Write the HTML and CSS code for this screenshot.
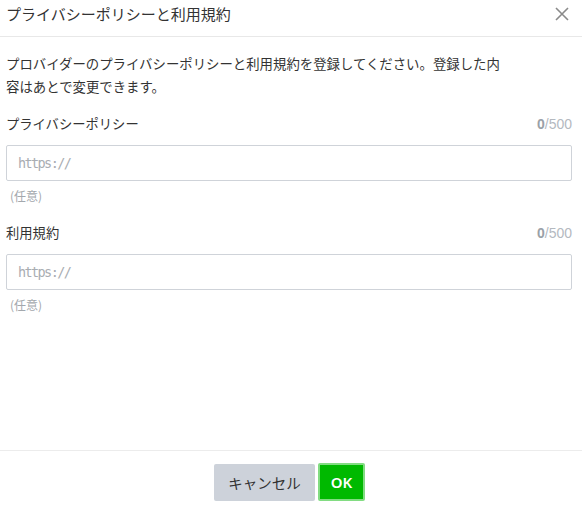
FILE: index.html
```html
<!DOCTYPE html>
<html lang="ja">
<head>
<meta charset="utf-8">
<link rel="stylesheet" href="styles.css">
</head>
<body>
<div class="dialog">
  <div class="header">
    <div class="title">プライバシーポリシーと利用規約</div>
    <div class="close" aria-label="close">
      <svg width="14" height="14" viewBox="0 0 14 14"><path d="M1 1L13 13M13 1L1 13" stroke="#8a8a8a" stroke-width="1.6" fill="none"/></svg>
    </div>
  </div>
  <div class="body">
    <p class="desc">プロバイダーのプライバシーポリシーと利用規約を登録してください。登録した内容はあとで変更できます。</p>
    <div class="field">
      <div class="label-row"><span class="label">プライバシーポリシー</span><span class="count"><b>0</b>/500</span></div>
      <input class="input" type="text" placeholder="https://">
      <div class="hint">(任意)</div>
    </div>
    <div class="field">
      <div class="label-row"><span class="label">利用規約</span><span class="count"><b>0</b>/500</span></div>
      <input class="input" type="text" placeholder="https://">
      <div class="hint">(任意)</div>
    </div>
  </div>
  <div class="footer">
    <button class="btn cancel">キャンセル</button>
    <button class="btn ok">OK</button>
  </div>
</div>
</body>
</html>
```
FILE: styles.css
```css
html, body {
  margin: 0;
  padding: 0;
  background: #fff;
}
body {
  font-family: "Noto Sans CJK JP", "Noto Sans", sans-serif;
  color: #333;
}
.dialog {
  height: 508px;
  display: flex;
  flex-direction: column;
}
.header {
  height: 36px;
  border-bottom: 1px solid #e8e8e8;
  display: flex;
  align-items: center;
  justify-content: space-between;
  padding: 0 13px 0 6px;
  box-sizing: content-box;
}
.title {
  font-size: 15px;
  line-height: 22px;
  margin-top: -8px;
  color: #333;
}
.close {
  display: flex;
  margin-top: -9px;
}
.body {
  flex: 1;
  padding: 15px 10px 0 6px;
}
.desc {
  margin: 0;
  max-width: 500px;
  font-size: 13.4px;
  line-height: 23px;
  color: #333;
}
.field {
  margin-top: 15px;
}
.field + .field {
  margin-top: 17px;
}
.label-row {
  display: flex;
  justify-content: space-between;
  align-items: center;
  height: 22px;
}
.label {
  font-size: 13.3px;
  line-height: 22px;
}
.count {
  font-family: "Liberation Sans", Arial, sans-serif;
  font-size: 14px;
  color: #b4b9bf;
}
.count b {
  color: #9aa1a8;
  font-weight: bold;
}
.input {
  display: block;
  width: 100%;
  box-sizing: border-box;
  height: 36px;
  margin-top: 10px;
  border: 1px solid #cfd3d9;
  border-radius: 2px;
  padding: 0 11px;
  font-family: "DejaVu Sans Mono", monospace;
  font-size: 13.5px;
  letter-spacing: -1.6px;
  color: #333;
  outline: none;
}
.input::placeholder {
  color: #a9adb2;
}
.hint {
  margin-top: 6px;
  font-size: 12px;
  line-height: 18px;
  color: #a3a8ad;
  padding-left: 4px;
}
.footer {
  height: 58px;
  border-top: 1px solid #ececec;
  display: flex;
  justify-content: center;
  align-items: center;
  gap: 3px;
  padding: 5px 3px 0 0;
  box-sizing: border-box;
}
.btn {
  font-family: "Noto Sans CJK JP", sans-serif;
  border-radius: 2px;
  cursor: pointer;
  box-sizing: border-box;
}
.cancel {
  width: 101px;
  height: 37px;
  background: #cdd2da;
  border: none;
  color: #333;
  font-size: 14.5px;
}
.ok {
  width: 47px;
  height: 38px;
  background: #00b900;
  border: 2px solid #82dc82;
  color: #fff;
  font-family: "Noto Sans", sans-serif;
  font-weight: 600;
  font-size: 15px;
}
```
